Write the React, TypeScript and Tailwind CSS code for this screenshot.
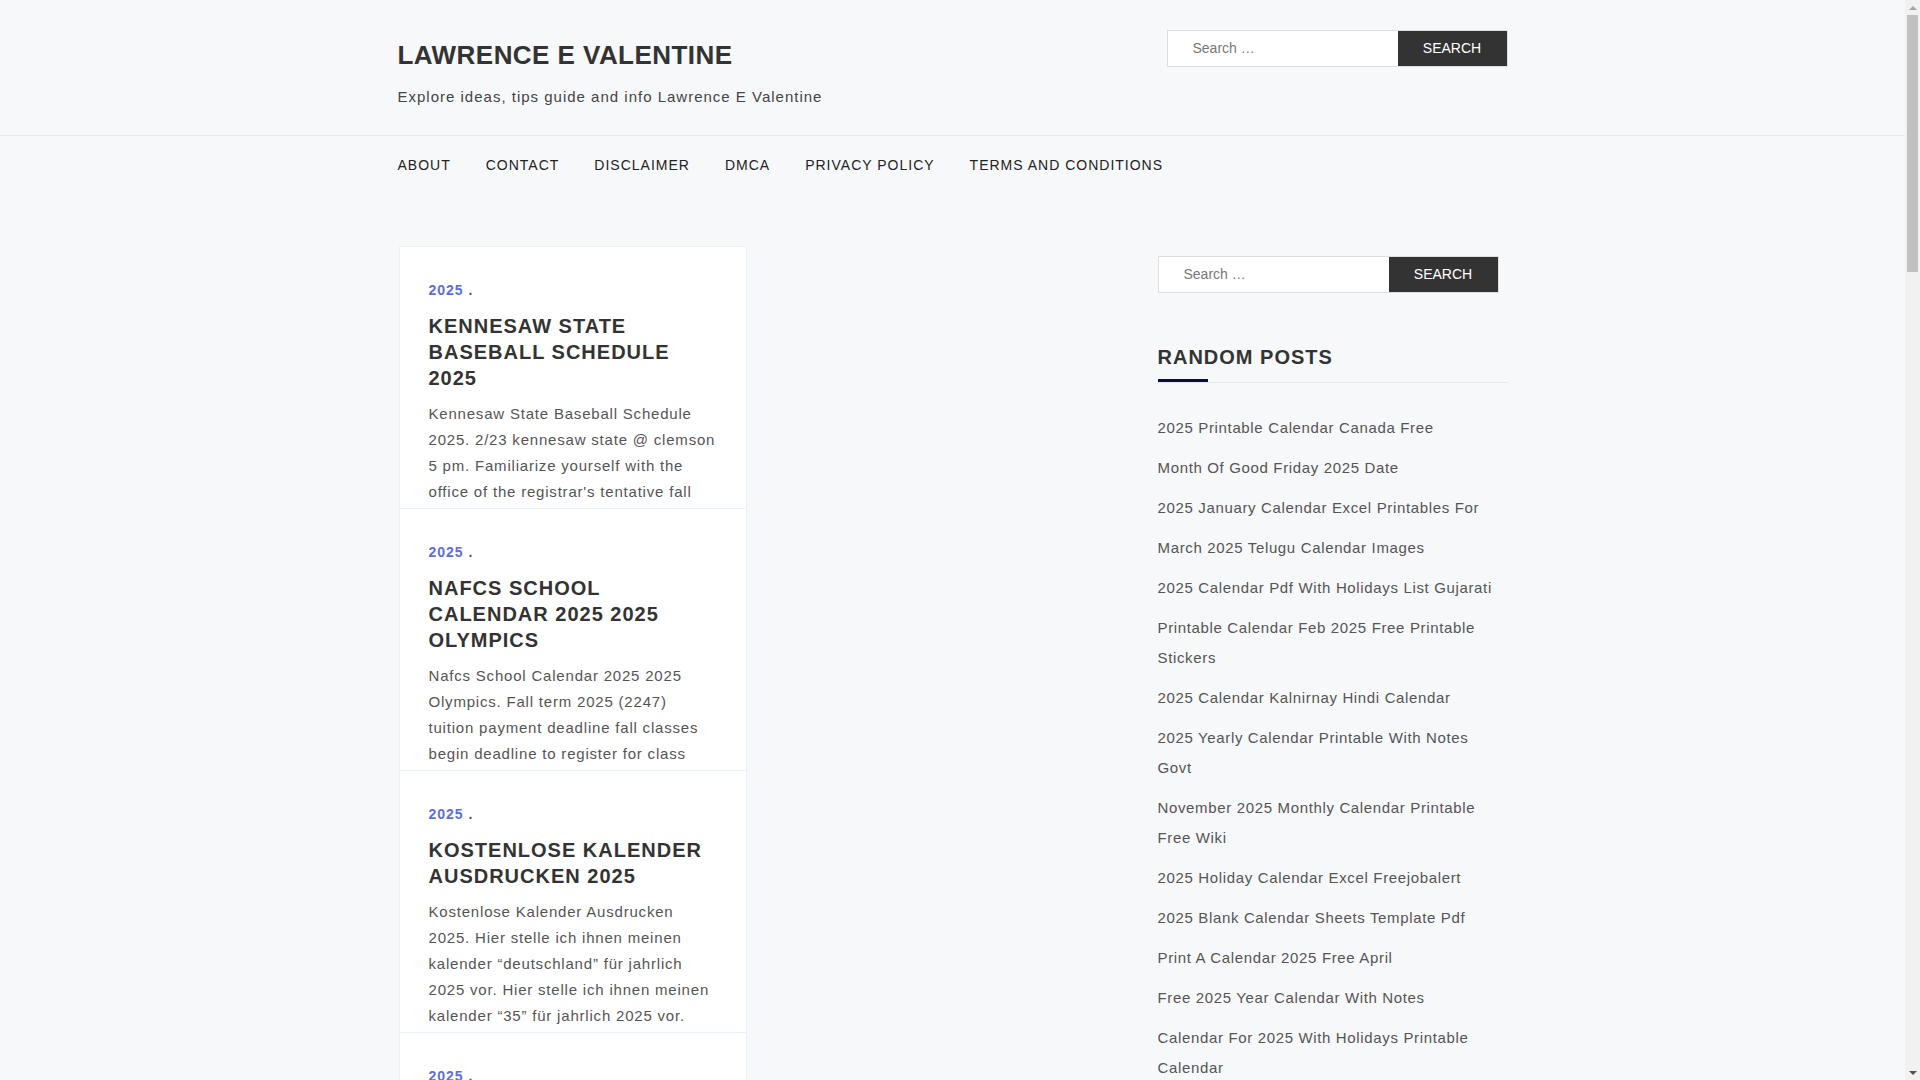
import React from 'react';

type Post = {
    year: string;
    title: string;
    excerpt: string[];
};

const posts: Post[] = [
    {
        year: '2025',
        title: 'Kennesaw State Baseball Schedule 2025',
        excerpt: [
            'Kennesaw State Baseball Schedule',
            '2025. 2/23 kennesaw state @ clemson',
            '5 pm. Familiarize yourself with the',
            "office of the registrar's tentative fall",
        ],
    },
    {
        year: '2025',
        title: 'Nafcs School Calendar 2025 2025 Olympics',
        excerpt: [
            'Nafcs School Calendar 2025 2025',
            'Olympics. Fall term 2025 (2247)',
            'tuition payment deadline fall classes',
            'begin deadline to register for class',
        ],
    },
    {
        year: '2025',
        title: 'Kostenlose Kalender Ausdrucken 2025',
        excerpt: [
            'Kostenlose Kalender Ausdrucken',
            '2025. Hier stelle ich ihnen meinen',
            'kalender “deutschland” für jahrlich',
            '2025 vor. Hier stelle ich ihnen meinen',
            'kalender “35” für jahrlich 2025 vor.',
        ],
    },
    {
        year: '2025',
        title: '2025 Printable Calendar Canada Free',
        excerpt: [
            '2025 Printable Calendar Canada Free.',
            'Download and print this free yearly',
            'calendar with canadian holidays and',
            'observances for the whole year.',
        ],
    },
];

const randomPosts = [
    '2025 Printable Calendar Canada Free',
    'Month Of Good Friday 2025 Date',
    '2025 January Calendar Excel Printables For',
    'March 2025 Telugu Calendar Images',
    '2025 Calendar Pdf With Holidays List Gujarati',
    'Printable Calendar Feb 2025 Free Printable Stickers',
    '2025 Calendar Kalnirnay Hindi Calendar',
    '2025 Yearly Calendar Printable With Notes Govt',
    'November 2025 Monthly Calendar Printable Free Wiki',
    '2025 Holiday Calendar Excel Freejobalert',
    '2025 Blank Calendar Sheets Template Pdf',
    'Print A Calendar 2025 Free April',
    'Free 2025 Year Calendar With Notes',
    'Calendar For 2025 With Holidays Printable Calendar',
    'Free Printable 2025 Monthly Calendar Word',
];

const navItems = ['About', 'Contact', 'Disclaimer', 'DMCA', 'Privacy Policy', 'Terms and Conditions'];

function SearchForm() {
    return (
        <form className="flex w-[341px] h-[37px] border border-[#dedede]" onSubmit={e => e.preventDefault()}>
            <input
                type="search"
                placeholder="Search …"
                className="flex-1 min-w-0 bg-white pl-[25px] text-[14px] text-[#555] placeholder:text-[#777] outline-none"
            />
            <button type="submit" className="w-[109px] bg-[#333] text-white text-[14px]">
                SEARCH
            </button>
        </form>
    );
}

function PostCard({ post }: { post: Post }) {
    return (
        <article className="bg-white border-x border-t last:border-b border-[#e9f1fb] px-[29px] pt-[30px] pb-[3px]">
            {/* Category + separator */}
            <div className="text-[14px] leading-[26px] font-bold tracking-[1px]">
                <a href="#" className="text-[#5b6ee1]">{post.year}</a>
                <span className="text-[#555]"> .</span>
            </div>
            <h2 className="mt-[10px] text-[20px] leading-[26px] font-bold tracking-[1px] text-[#333] uppercase">
                <a href="#">{post.title}</a>
            </h2>
            <p className="mt-[10px] text-[15px] leading-[26px] tracking-[0.8px] text-[#555]">
                {post.excerpt.map(line => (
                    <span key={line} className="block">{line}</span>
                ))}
            </p>
        </article>
    );
}

/** Classic browser scrollbar, as seen in the page capture. */
function Scrollbar() {
    return (
        <div className="fixed right-0 top-0 h-screen w-[15px] bg-[#f1f1f1] flex flex-col items-center">
            <div className="h-[15px] flex items-center justify-center">
                <span className="w-0 h-0 border-x-[4px] border-x-transparent border-b-[4px] border-b-[#a3a3a3]" />
            </div>
            <div className="w-[11px] h-[257px] bg-[#c1c1c1]" />
            <div className="mt-auto h-[15px] flex items-center justify-center">
                <span className="w-0 h-0 border-x-[4px] border-x-transparent border-t-[4px] border-t-[#505050]" />
            </div>
        </div>
    );
}

export default function App() {
    return (
        <div className="min-h-screen bg-[#f7f8fa] font-['Liberation_Sans',Arial,sans-serif]">
            <div className="mr-[15px] pb-[60px]">
                <header className="border-b border-[#e8eaed]">
                    <div className="mx-auto w-[1110px] flex justify-between items-start pt-[30px] pb-[26px]">
                        <div className="pt-[9px]">
                            <h1 className="text-[26px] leading-[32px] font-bold tracking-[0.45px] text-[#333]">
                                <a href="#">LAWRENCE E VALENTINE</a>
                            </h1>
                            <p className="mt-[14px] text-[15px] leading-[24px] tracking-[1px] text-[#444]">
                                Explore ideas, tips guide and info Lawrence E Valentine
                            </p>
                        </div>
                        <SearchForm />
                    </div>
                </header>

                <nav className="mx-auto w-[1110px] flex gap-[35px] pt-[17px] text-[14px] leading-[24px] tracking-[1px] text-[#222] uppercase">
                    {navItems.map(item => (
                        <a key={item} href="#">{item}</a>
                    ))}
                </nav>

                <main className="mx-auto w-[1110px] flex gap-[30px] pt-[69px]">
                    <div className="w-[730px]">
                        <div className="ml-px w-[348px] flex flex-col">
                            {posts.map(p => (
                                <PostCard key={p.title} post={p} />
                            ))}
                        </div>
                    </div>

                    <aside className="w-[350px] pt-[10px]">
                        <SearchForm />

                        <section className="mt-[51px]">
                            <h2 className="relative pb-[12px] border-b border-[#e6e8eb] text-[20px] leading-[26px] font-bold tracking-[1px] text-[#333]">
                                RANDOM POSTS
                                <span className="absolute left-0 bottom-0 w-[50px] h-[3px] bg-[#0c1033]" />
                            </h2>
                            <ul className="mt-[30px] w-[342px] flex flex-col gap-[10px]">
                                {randomPosts.map(title => (
                                    <li key={title} className="text-[15px] leading-[30px] tracking-[0.65px] text-[#555]">
                                        <a href="#">{title}</a>
                                    </li>
                                ))}
                            </ul>
                        </section>
                    </aside>
                </main>
            </div>
            <Scrollbar />
        </div>
    );
}
